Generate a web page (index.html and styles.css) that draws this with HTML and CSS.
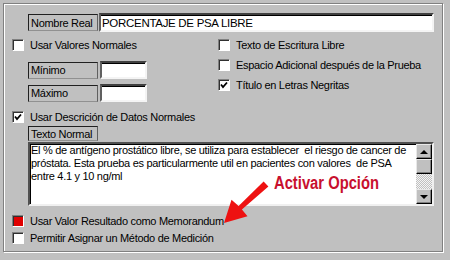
FILE: index.html
```html
<!DOCTYPE html>
<html lang="es">
<head>
  <meta charset="UTF-8" />
  <title>Configuración de Prueba</title>
  <link rel="stylesheet" href="styles.css">
</head>
<body>
  <div class="frame">
    <!-- Nombre -->
    <div class="name-row">
      <span class="tag">Nombre Real</span>
      <span class="field field-name">PORCENTAJE DE PSA LIBRE</span>
    </div>

    <!-- Opciones -->
    <div class="options">
      <div class="col">
        <div class="check"><span class="box"></span>Usar Valores Normales</div>
        <div class="range-row range-first">
          <span class="tag">Mínimo</span>
          <span class="field field-small"></span>
        </div>
        <div class="range-row">
          <span class="tag">Máximo</span>
          <span class="field field-small"></span>
        </div>
      </div>
      <div class="col">
        <div class="check"><span class="box"></span>Texto de Escritura Libre</div>
        <div class="check"><span class="box"></span>Espacio Adicional después de la Prueba</div>
        <div class="check">
          <span class="box"><svg width="10" height="10" viewBox="0 0 10 10"><polyline points="2,4.5 4,7 8,2.5" fill="none" stroke="#000" stroke-width="1.8"/></svg></span>Título en Letras Negritas
        </div>
      </div>
    </div>

    <div class="check check-desc">
      <span class="box"><svg width="10" height="10" viewBox="0 0 10 10"><polyline points="2,4.5 4,7 8,2.5" fill="none" stroke="#000" stroke-width="1.8"/></svg></span>Usar Descrición de Datos Normales
    </div>

    <!-- Texto normal -->
    <span class="tag tag-note">Texto Normal</span>
    <div class="memo">
      <div class="memo-text">El % de antígeno prostático libre, se utiliza para establecer&nbsp; el riesgo de cancer de próstata. Esta prueba es particularmente util en pacientes con valores&nbsp; de PSA entre 4.1 y 10 ng/ml</div>
      <div class="scroll">
        <div class="btn"><span class="tri-up"></span></div>
        <div class="thumb"></div>
        <div class="track"></div>
        <div class="btn"><span class="tri-down"></span></div>
      </div>
    </div>

    <div class="check check-low check-first"><span class="box box-red"></span>Usar Valor Resultado como Memorandum</div>
    <div class="check check-low"><span class="box"></span>Permitir Asignar un Método de Medición</div>

    <!-- Anotación -->
    <span class="callout">Activar Opción</span>
    <svg class="arrow" width="52" height="50" viewBox="219 177 52 50">
      <polygon points="263.6,181.5 238.6,205.9 231.5,199.7 224,223 247.5,216.3 241.9,209.5 268.4,186.5" fill="#ee1111"/>
    </svg>
  </div>
</body>
</html>
```

FILE: styles.css
```css
body {
  margin: 0;
  background-color: #c0c0c0;
  font-family: 'Liberation Sans', Arial, sans-serif;
  font-size: 11px;
  letter-spacing: -0.3px;
  color: #000;
}

.frame {
  position: relative;
  box-sizing: border-box;
  width: 440px;
  height: 249px;
  margin: 3px;
  padding: 9px 0 0 8px;
  border: 1px solid #808080;
  box-shadow: inset 1px 1px #fff, 1px 1px #fff;
}

.name-row {
  display: flex;
  align-items: center;
  height: 19px;
  margin-left: 16px;
}

.tag {
  display: flex;
  align-items: center;
  box-sizing: border-box;
  width: 70px;
  height: 17px;
  padding-left: 2px;
  border: 1px solid;
  border-color: #202020 #606060 #909090 #202020;
  white-space: nowrap;
}

.field {
  display: flex;
  align-items: center;
  box-sizing: border-box;
  margin-left: 1px;
  padding-left: 1px;
  background: #fff;
  border: 2px solid;
  border-color: #404040 #f4f4f4 #f4f4f4 #606060;
  box-shadow: inset 0 1px #000;
  font-size: 11.5px;
}

.field-name {
  width: 335px;
  height: 19px;
}

.field-small {
  width: 47px;
  height: 18px;
  margin-left: 2px;
}

.options {
  display: grid;
  grid-template-columns: 206px 1fr;
  margin-top: 3px;
}

.check {
  display: flex;
  align-items: center;
  height: 20px;
  white-space: nowrap;
}

.box {
  display: flex;
  align-items: center;
  justify-content: center;
  box-sizing: border-box;
  width: 12px;
  height: 12px;
  margin-right: 6px;
  background: #fff;
  border: 1px solid;
  border-color: #808080 #fff #fff #808080;
  box-shadow: inset 1px 1px #303030;
}

.box-red {
  background: #e00000;
}

.range-row {
  display: flex;
  align-items: center;
  height: 18px;
  margin: 5px 0 0 16px;
}

.range-first {
  margin-top: 6px;
}

.check-desc {
  height: 18px;
  margin-top: 6px;
}

.tag-note {
  height: 15px;
  margin-left: 16px;
}

.memo {
  display: flex;
  box-sizing: border-box;
  width: 406px;
  height: 64px;
  margin: 1px 0 0 16px;
  background: #fff;
  border: 2px solid;
  border-color: #505050 #f0f0f0 #f0f0f0 #505050;
  box-shadow: inset 1px 1px #000;
}

.memo-text {
  flex: 1;
  padding-left: 1px;
  line-height: 13px;
  overflow: hidden;
}

.scroll {
  display: flex;
  flex-direction: column;
  width: 16px;
}

.btn {
  display: flex;
  align-items: center;
  justify-content: center;
  box-sizing: border-box;
  height: 15px;
  background: #c0c0c0;
  border: 1px solid;
  border-color: #e8e8e8 #000 #000 #e8e8e8;
  box-shadow: inset -1px -1px #808080;
}

.thumb {
  box-sizing: border-box;
  height: 15px;
  background: #c0c0c0;
  border: 1px solid;
  border-color: #e8e8e8 #000 #000 #e8e8e8;
  box-shadow: inset -1px -1px #808080;
}

.track {
  flex: 1;
  background: repeating-conic-gradient(#c0c0c0 0 25%, #f4f4f4 0 50%) 0 0 / 2px 2px;
}

.tri-up, .tri-down {
  width: 0;
  height: 0;
  border-left: 4px solid transparent;
  border-right: 4px solid transparent;
}

.tri-up {
  border-bottom: 4px solid #000;
}

.tri-down {
  border-top: 4px solid #000;
}

.check-low {
  height: 17px;
}

.check-first {
  margin-top: 6px;
}

.callout {
  position: absolute;
  left: 270px;
  top: 170px;
  font-family: 'Liberation Sans', sans-serif;
  font-size: 18px;
  font-weight: bold;
  letter-spacing: 0;
  line-height: 18px;
  color: #c8102e;
  transform: scaleX(0.82);
  transform-origin: left center;
}

.arrow {
  position: absolute;
  left: 215px;
  top: 173px;
}
```
